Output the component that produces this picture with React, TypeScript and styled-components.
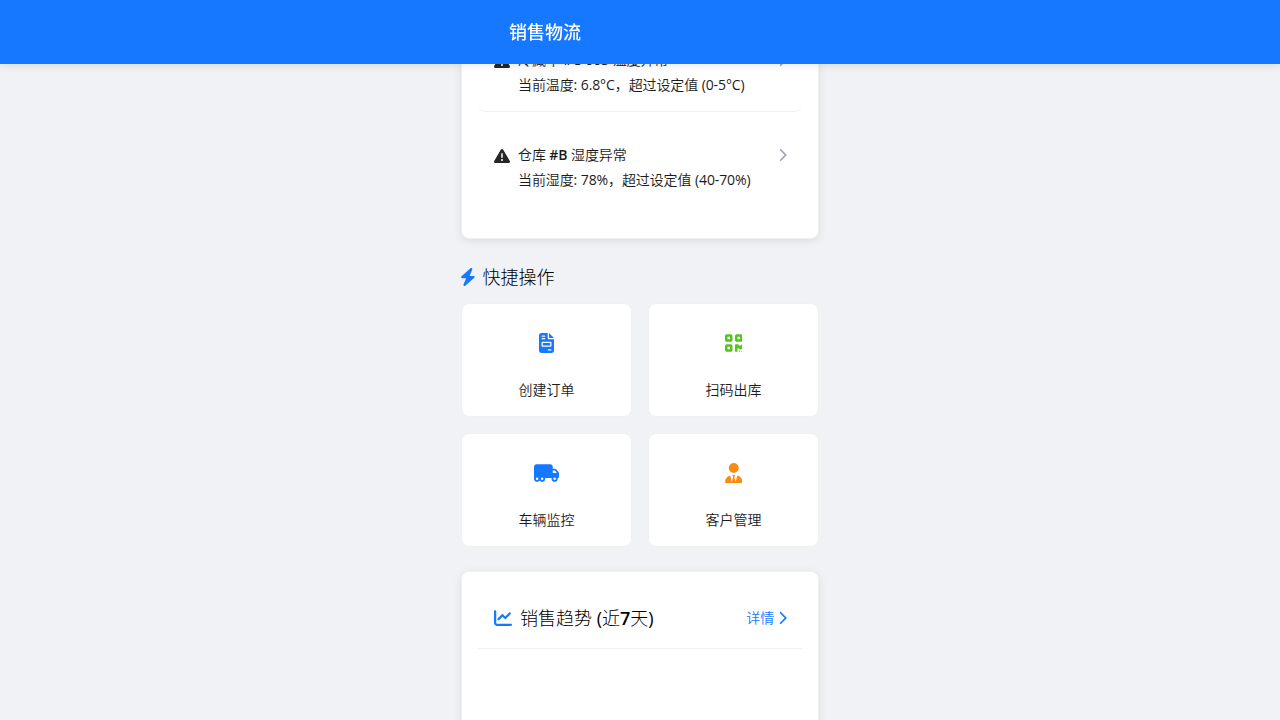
import React from "react";
import styled, { createGlobalStyle } from "styled-components";
import {
  FaBolt,
  FaChartLine,
  FaChevronRight,
  FaFileInvoice,
  FaQrcode,
  FaTriangleExclamation,
  FaTruckMoving,
  FaUserTie,
} from "react-icons/fa6";

const GlobalStyle = createGlobalStyle`
  * { box-sizing: border-box; }
  html, body { margin: 0; height: 100%; overflow: hidden; }
  body {
    background: #f0f2f5;
    color: #1c1c1c;
    font-family: "Open Sans", "Noto Sans CJK SC", sans-serif;
    font-size: 14px;
    font-weight: 350;
    line-height: 21px;
  }
`;

const Screen = styled.div`
  height: 720px;
  overflow: hidden;
`;

const TopBar = styled.header`
  position: fixed;
  top: 0;
  left: 0;
  right: 0;
  z-index: 10;
  height: 64px;
  background: #1677ff;
  color: #fff;
  box-shadow: 0 2px 8px rgba(0, 0, 0, 0.09);
`;

const TopBarInner = styled.div`
  width: 390px;
  height: 100%;
  margin: 0 auto;
  padding: 0 64px;
  display: flex;
  align-items: center;
`;

const AppTitle = styled.h1`
  margin: 0;
  font-size: 18px;
  line-height: 28px;
  font-weight: 500;
`;

const Content = styled.main`
  width: 390px;
  margin: 0 auto;
  padding: 16px;
  display: flex;
  flex-direction: column;
  gap: 24px;
`;

const Card = styled.section<{ $minHeight?: number }>`
  min-height: ${(p) => p.$minHeight ?? 0}px;
  padding: 16px;
  background: #fff;
  border: 1px solid #f0f0f0;
  border-radius: 8px;
  box-shadow: 0 2px 8px rgba(0, 0, 0, 0.09);
`;

const Glyph = styled.span<{ $units: number; $size: number; $bleed?: number }>`
  display: block;
  flex: none;
  margin: 0 ${(p) => -(p.$bleed ?? 0)}px;

  svg {
    display: block;
    width: ${(p) => (p.$units / 512) * p.$size}px;
    height: ${(p) => p.$size}px;
  }
`;

const AlertRow = styled.div`
  display: flex;
  align-items: flex-start;
  gap: 8px;
  padding: 16px;
  margin-bottom: 16px;
  border-radius: 8px;
  border-bottom: 1px solid #f0f0f0;

  &:last-child { border-bottom: 0; }
`;

const AlertIcon = styled.span`
  padding-top: 4px;
  color: #262626;
`;

const AlertBody = styled.div`
  flex: 1;
  display: flex;
  flex-direction: column;
  gap: 4px;
  letter-spacing: -0.1px;
  white-space: nowrap;
`;

const Arrow = styled.span`
  padding-top: 4px;
  margin-right: -1px;
  color: #a0a4b8;
`;

const Strong = styled.span`
  font-weight: 600;
`;

const Latin = styled.span`
  font-weight: 400;
`;

const SectionTitle = styled.h2`
  margin: 0;
  display: flex;
  align-items: center;
  gap: 8px;
  font-size: 18px;
  line-height: 28px;
  font-weight: 300;
  color: #000;
  white-space: nowrap;

  svg { color: #1677ff; }
`;

const QuickActions = styled.section`
  display: flex;
  flex-direction: column;
  gap: 12px;
`;

const TileGrid = styled.div`
  display: grid;
  grid-template-columns: 1fr 1fr;
  gap: 16px;
`;

const Tile = styled.div`
  height: 114px;
  padding: 16px;
  display: flex;
  flex-direction: column;
  align-items: center;
  justify-content: space-between;
  background: #fff;
  border: 1px solid #f0f0f0;
  border-radius: 8px;
`;

const TileIcon = styled.span<{ $color: string }>`
  height: 46px;
  display: flex;
  align-items: center;
  color: ${(p) => p.$color};
`;

const CardHeader = styled.div`
  display: flex;
  align-items: center;
  justify-content: space-between;
  padding: 16px;
  border-bottom: 1px solid #f0f0f0;
`;

const DetailLink = styled.a`
  display: flex;
  align-items: center;
  gap: 4px;
  margin: -1px -1px 0 0;
  color: #1677ff;
`;

const alerts = [
  { subject: "冷藏车", code: "#C-003", issue: "温度异常", detail: "当前温度: 6.8°C，超过设定值 (0-5°C)" },
  { subject: "仓库", code: "#B", issue: "湿度异常", detail: "当前湿度: 78%，超过设定值 (40-70%)" },
];

const actions = [
  { label: "创建订单", color: "#1677ff", Icon: FaFileInvoice, units: 384 },
  { label: "扫码出库", color: "#52c41a", Icon: FaQrcode, units: 448 },
  { label: "车辆监控", color: "#1677ff", Icon: FaTruckMoving, units: 640 },
  { label: "客户管理", color: "#fa8c16", Icon: FaUserTie, units: 448 },
];

// Latin runs get a regular weight so they balance the lighter Chinese text.
function MixedText({ text }: { text: string }) {
  return (
    <>
      {text.split(/([\u0020-\u00ff]+)/).map((run, i) => (i % 2 ? <Latin key={i}>{run}</Latin> : run))}
    </>
  );
}

export default function App() {
  return (
    <Screen>
      <GlobalStyle />
      <TopBar>
        <TopBarInner>
          <AppTitle>销售物流</AppTitle>
        </TopBarInner>
      </TopBar>
      <Content>
        <Card>
          {alerts.map((a) => (
            <AlertRow key={a.code}>
              <AlertIcon>
                <Glyph $units={512} $size={16}>
                  <FaTriangleExclamation />
                </Glyph>
              </AlertIcon>
              <AlertBody>
                <div>
                  {a.subject} <Strong>{a.code}</Strong> {a.issue}
                </div>
                <div>
                  <MixedText text={a.detail} />
                </div>
              </AlertBody>
              <Arrow>
                <Glyph $units={320} $size={14}>
                  <FaChevronRight />
                </Glyph>
              </Arrow>
            </AlertRow>
          ))}
        </Card>
        <QuickActions>
          <SectionTitle>
            <Glyph $units={448} $size={18} $bleed={1.125}>
              <FaBolt />
            </Glyph>
            快捷操作
          </SectionTitle>
          <TileGrid>
            {actions.map(({ label, color, Icon, units }) => (
              <Tile key={label}>
                <TileIcon $color={color}>
                  <Glyph $units={units} $size={20}>
                    <Icon />
                  </Glyph>
                </TileIcon>
                <span>{label}</span>
              </Tile>
            ))}
          </TileGrid>
        </QuickActions>
        <Card $minHeight={320}>
          <CardHeader>
            <SectionTitle>
              <Glyph $units={512} $size={18}>
                <FaChartLine />
              </Glyph>
              <span>
                销售趋势<Latin> (</Latin>近<Strong>7</Strong>天<Latin>)</Latin>
              </span>
            </SectionTitle>
            <DetailLink>
              详情
              <Glyph $units={320} $size={14}>
                <FaChevronRight />
              </Glyph>
            </DetailLink>
          </CardHeader>
        </Card>
      </Content>
    </Screen>
  );
}
